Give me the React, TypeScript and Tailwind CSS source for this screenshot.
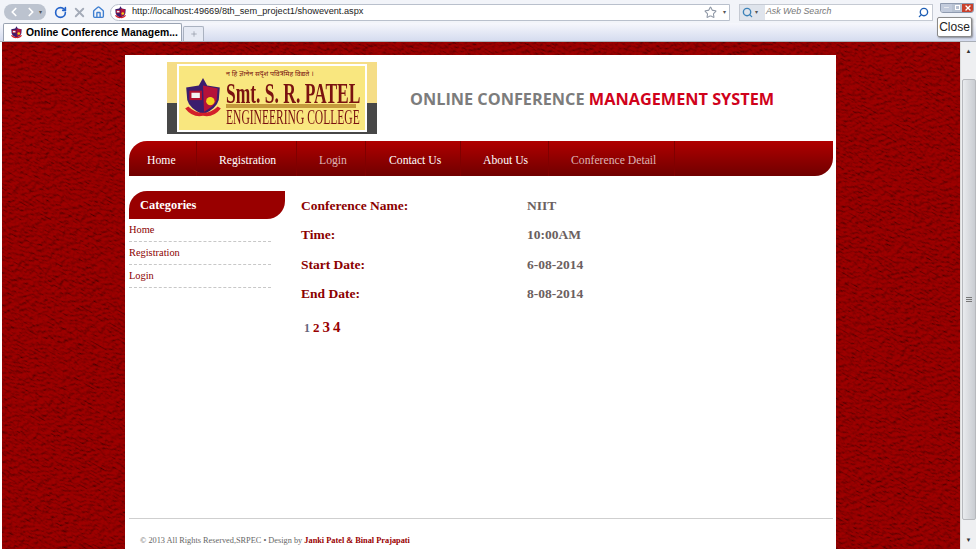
import React from 'react';
import { ChevronLeft, ChevronRight, RotateCw, X, Home, Star, Search, Plus, Minus } from 'lucide-react';

const serif = { fontFamily: '"Liberation Serif", serif' };

const navItems = [
  { label: 'Home', cls: 'w-[68px] pl-[18px]', dim: false },
  { label: 'Registration', cls: 'w-[100px] pl-[22px]', dim: false },
  { label: 'Login', cls: 'w-[69px] pl-[22px]', dim: true },
  { label: 'Contact Us', cls: 'w-[95px] pl-[23px]', dim: false },
  { label: 'About Us', cls: 'w-[88px] pl-[22px]', dim: false },
  { label: 'Conference Detail', cls: 'w-[126px] pl-[22px]', dim: true },
];

const details = [
  ['Conference Name:', 'NIIT'],
  ['Time:', '10:00AM'],
  ['Start Date:', '6-08-2014'],
  ['End Date:', '8-08-2014'],
];

function Crest({ size }: { size: number }) {
  return (
    <svg width={size} height={size} viewBox="0 0 40 40" className="shrink-0">
      <path d="M20 1 L24 8 L36 10 L35 22 Q33 30 20 36 Q7 30 5 22 L4 10 L16 8 Z" fill="#3b1d6e" />
      <path d="M20 8 L34 11 L33 22 Q31 28 21 33 Z" fill="#b5123a" />
      <rect x="8" y="14" width="10" height="7" fill="#f2f2f2" stroke="#b01030" strokeWidth="2" />
      <circle cx="27" cy="23" r="4" fill="#f4d21f" />
      <path d="M3 30 Q10 39 20 37 Q30 39 37 30 L34 28 Q28 34 20 34 Q12 34 6 28 Z" fill="#d3202a" />
    </svg>
  );
}

function Texture() {
  return (
    <svg className="absolute inset-0 w-full h-full" aria-hidden="true">
      <filter id="leather" x="0" y="0" width="100%" height="100%">
        <feTurbulence type="fractalNoise" baseFrequency="0.22 0.6" numOctaves="3" seed="11" result="n" />
        <feDiffuseLighting in="n" surfaceScale="3" diffuseConstant="1" lightingColor="#a00600">
          <feDistantLight azimuth="225" elevation="62" />
        </feDiffuseLighting>
      </filter>
      <g transform="rotate(30)">
        <rect x="-300" y="-700" width="1700" height="1700" filter="url(#leather)" />
      </g>
    </svg>
  );
}

function BrowserChrome() {
  return (
    <div className="relative shrink-0 h-[42px] bg-[#f2f4f9] border-b border-[#a9aeb6]">
      <div className="flex items-center h-[23px] pl-1 pt-[1px]">
        <div className="flex items-center w-[42px] h-[16px] rounded-full bg-[#bcc3cf] text-white">
          <ChevronLeft size={14} strokeWidth={3} className="ml-[3px]" />
          <ChevronRight size={14} strokeWidth={3} className="ml-[3px]" />
          <span className="ml-[1px] text-[6px] text-[#555]">▾</span>
        </div>
        <RotateCw size={13} strokeWidth={3} className="ml-[8px] text-[#2463c9]" />
        <X size={15} strokeWidth={3} className="ml-[5px] text-[#a4abb8]" />
        <Home size={13} strokeWidth={2.5} className="ml-[5px] text-[#3f7fd0]" />
        <div className="flex items-center w-[620px] h-[17px] ml-[5px] bg-white border border-[#b9c0cc] rounded-l-full pl-[3px]">
          <Crest size={13} />
          <span className="ml-[5px] text-[9.2px] text-[#222] font-['Liberation_Sans',sans-serif]">http://localhost:49669/8th_sem_project1/showevent.aspx</span>
          <Star size={13} className="ml-auto text-[#8f98a6]" />
          <span className="ml-[6px] mr-[3px] text-[6px] text-[#555]">▾</span>
        </div>
        <div className="flex items-center w-[194px] h-[17px] ml-[9px] bg-white border border-[#c5cad3] pr-[3px]">
          <div className="flex items-center h-full w-[25px] pl-[2px] bg-[#dfe4ec]">
            <Search size={11} strokeWidth={3} className="text-[#3c82b8]" />
            <span className="ml-[2px] text-[6px] text-[#555]">▾</span>
          </div>
          <span className="ml-[1px] text-[8.8px] italic text-[#777] font-['Liberation_Sans',sans-serif]">Ask Web Search</span>
          <Search size={11} strokeWidth={3} className="ml-auto text-[#1f5fb5] -scale-x-100" />
        </div>
        <div className="flex h-[10px] w-[34px] ml-[7px] -mt-[9px] rounded-b-[3px] overflow-hidden border border-[#8f9bb0]">
          <div className="flex-1 flex items-center justify-center bg-[#c2cbdc]"><Minus size={7} className="text-white" /></div>
          <div className="flex-1 flex items-center justify-center bg-[#b8c2d2]"><span className="block w-[5px] h-[5px] border border-white" /></div>
          <div className="flex-1 flex items-center justify-center bg-[#c9402c]"><X size={8} strokeWidth={4} className="text-white" /></div>
        </div>
      </div>
      <div className="flex items-end h-[18px] pl-[3px] bg-gradient-to-b from-[#f6f7fc] to-[#d5dcef]">
        <div className="flex items-center w-[179px] h-[18px] bg-white border border-b-0 border-[#9aa3b2] rounded-t-[2px] pl-[6px]">
          <Crest size={13} />
          <span className="ml-[3px] text-[10.4px] font-bold text-black whitespace-nowrap font-['Liberation_Sans',sans-serif]">Online Conference Managem...</span>
        </div>
        <div className="flex items-center justify-center w-[21px] h-[15px] ml-[1px] bg-[#e6eaf4] border border-b-0 border-[#aab2c0] rounded-t-[2px]">
          <Plus size={8} className="text-[#8b93a1]" />
        </div>
      </div>
      <div className="absolute left-[937px] top-[17px] w-[35px] h-[20px] flex items-center justify-center bg-white border border-[#8a8a8a] rounded-[2px] shadow-[1px_1px_2px_rgba(0,0,0,0.4)] text-[12px] text-[#222] font-['Liberation_Sans',sans-serif]">
        Close
      </div>
    </div>
  );
}

function Scrollbar() {
  return (
    <div className="shrink-0 w-[16px] flex flex-col items-center bg-[#eeeff1] border-l border-[#dcdcdc]">
      <span className="h-[18px] flex items-center text-[6px] text-[#333]">▲</span>
      <div className="flex-1 w-[14px] mt-[19px] bg-gradient-to-r from-[#e9ebee] to-[#c9ccd1] border border-[#b7b9bd] rounded-[2px] flex items-center justify-center">
        <div className="flex flex-col gap-[1px] w-[6px]">
          <span className="h-px bg-[#777]" /><span className="h-px bg-[#777]" /><span className="h-px bg-[#777]" />
        </div>
      </div>
      <span className="h-[29px] flex items-center pt-[11px] text-[6px] text-[#333]">▼</span>
    </div>
  );
}

export default function App() {
  return (
    <div className="w-[976px] h-[549px] overflow-hidden flex flex-col bg-white" style={serif}>
      <BrowserChrome />
      <div className="flex flex-1 min-h-0">
        <div className="relative flex-1 ml-[2px] pt-[13px] pl-[123px] overflow-hidden">
          <Texture />
          <div className="relative w-[711px] h-full bg-white flex flex-col pl-[4px] pr-[3px]">
            {/* header */}
            <div className="flex items-start h-[86px] pt-[7px]">
              <div className="ml-[38px] w-[210px] h-[72px] px-[10px] py-[2px] bg-[linear-gradient(#f5dd86_57%,#474747_57%)]">
                <div className="h-full bg-[#f9e77f] border-[2px] border-white flex items-center pl-[3px]">
                  <Crest size={42} />
                  <div className="ml-[2px] w-[130px] -mt-[1px] flex flex-col text-[#7a1210]">
                    <span className="text-[7px] leading-[8px] whitespace-nowrap" style={{ fontFamily: '"Noto Sans", sans-serif' }}>न हि ज्ञानेन सदृशं पवित्रमिह विद्यते ।</span>
                    <span className="mt-[3px] text-[30px] leading-[23px] font-bold whitespace-nowrap origin-left scale-x-[0.583]">Smt. S. R. PATEL</span>
                    <span className="w-full h-[4px] mb-[1px] bg-[#c49a3c]" />
                    <span className="text-[21px] leading-[16px] whitespace-nowrap origin-left scale-x-[0.55]">ENGINEERING COLLEGE</span>
                  </div>
                </div>
              </div>
              <div className="ml-[33px] mt-[26px] text-[16.3px] leading-[23px] font-bold whitespace-nowrap font-['Open_Sans',sans-serif]">
                <span className="text-[#7c7c7c]">ONLINE CONFERENCE </span>
                <span className="text-[#d0021b]">MANAGEMENT SYSTEM</span>
              </div>
            </div>

            {/* nav */}
            <nav className="flex h-[35px] rounded-tl-[18px] rounded-br-[18px] bg-gradient-to-b from-[#b00000] to-[#700000] overflow-hidden">
              {navItems.map((item) => (
                <a key={item.label} className={`${item.cls} flex items-center pt-[4px] border-r border-[#800000] text-[11.7px] whitespace-nowrap ${item.dim ? 'text-[#dcb4b4]' : 'text-white'}`}>
                  {item.label}
                </a>
              ))}
            </nav>

            <div className="flex flex-1 min-h-0 pt-[15px]">
              {/* sidebar */}
              <aside className="w-[156px] shrink-0">
                <h2 className="h-[28px] flex items-center pl-[11px] bg-[#990000] rounded-tl-[18px] rounded-br-[18px] text-[12.4px] font-bold text-white">Categories</h2>
                <ul className="w-[142px] text-[10.4px] text-[#8b0000]">
                  <li className="h-[23px] pt-[3px] border-b border-dashed border-[#c8c8c8]">Home</li>
                  <li className="h-[23px] pt-[3px] border-b border-dashed border-[#c8c8c8]">Registration</li>
                  <li className="h-[23px] pt-[3px] border-b border-dashed border-[#c8c8c8]">Login</li>
                </ul>
              </aside>

              {/* event details */}
              <main className="ml-[16px] flex flex-col">
                {details.map(([label, value]) => (
                  <div key={label} className="flex items-center h-[29.5px] text-[13.5px] font-bold">
                    <span className="w-[226px] text-[#8b0000]">{label}</span>
                    <span className="text-[#6b6060] text-[13.5px]">{value}</span>
                  </div>
                ))}
                <div className="flex items-baseline gap-[3px] mt-[7px] pl-[3px] font-bold text-[#990000]">
                  <span className="text-[12px] text-[#66667a]">1</span>
                  <span className="text-[13px]">2</span>
                  <span className="text-[15px]">3</span>
                  <span className="text-[15px]">4</span>
                </div>
              </main>
            </div>

            {/* footer */}
            <footer className="h-[31px] shrink-0 border-t border-[#cfcfcf] pt-[16px] pl-[11px] text-[8.3px] leading-[11px] text-[#666] whitespace-nowrap">
              © 2013 All Rights Reserved,SRPEC • Design by <span className="font-bold text-[#990000]">Janki Patel &amp; Binal Prajapati</span>
            </footer>
          </div>
        </div>
        <Scrollbar />
      </div>
    </div>
  );
}
